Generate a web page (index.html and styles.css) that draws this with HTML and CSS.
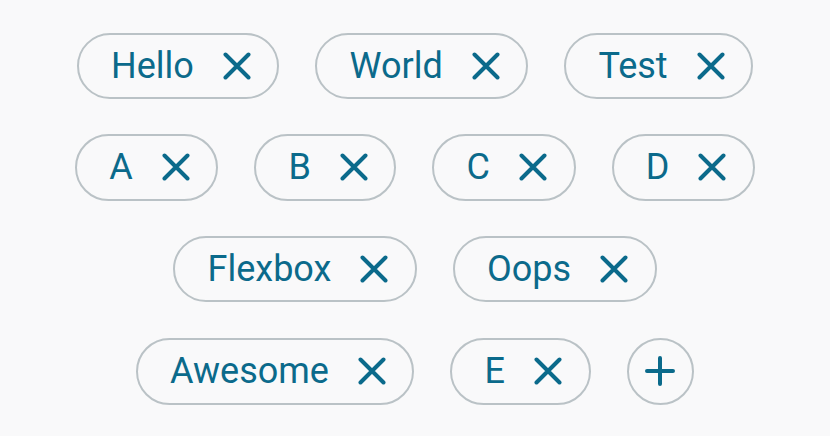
FILE: index.html
```html
<!DOCTYPE html>
<html lang="en">
<head>
<meta charset="utf-8">
<title>Chips</title>
<link rel="stylesheet" href="styles.css">
</head>
<body>
<div class="chips">
  <div class="chip"><span class="label">Hello</span><svg class="close" viewBox="0 0 28 28"><path d="M2.5 2.5L25.5 25.5M25.5 2.5L2.5 25.5"/></svg></div>
  <div class="chip"><span class="label">World</span><svg class="close" viewBox="0 0 28 28"><path d="M2.5 2.5L25.5 25.5M25.5 2.5L2.5 25.5"/></svg></div>
  <div class="chip"><span class="label">Test</span><svg class="close" viewBox="0 0 28 28"><path d="M2.5 2.5L25.5 25.5M25.5 2.5L2.5 25.5"/></svg></div>
  <div class="chip"><span class="label">A</span><svg class="close" viewBox="0 0 28 28"><path d="M2.5 2.5L25.5 25.5M25.5 2.5L2.5 25.5"/></svg></div>
  <div class="chip"><span class="label">B</span><svg class="close" viewBox="0 0 28 28"><path d="M2.5 2.5L25.5 25.5M25.5 2.5L2.5 25.5"/></svg></div>
  <div class="chip"><span class="label">C</span><svg class="close" viewBox="0 0 28 28"><path d="M2.5 2.5L25.5 25.5M25.5 2.5L2.5 25.5"/></svg></div>
  <div class="chip"><span class="label">D</span><svg class="close" viewBox="0 0 28 28"><path d="M2.5 2.5L25.5 25.5M25.5 2.5L2.5 25.5"/></svg></div>
  <div class="chip"><span class="label">Flexbox</span><svg class="close" viewBox="0 0 28 28"><path d="M2.5 2.5L25.5 25.5M25.5 2.5L2.5 25.5"/></svg></div>
  <div class="chip"><span class="label">Oops</span><svg class="close" viewBox="0 0 28 28"><path d="M2.5 2.5L25.5 25.5M25.5 2.5L2.5 25.5"/></svg></div>
  <div class="chip"><span class="label">Awesome</span><svg class="close" viewBox="0 0 28 28"><path d="M2.5 2.5L25.5 25.5M25.5 2.5L2.5 25.5"/></svg></div>
  <div class="chip"><span class="label">E</span><svg class="close" viewBox="0 0 28 28"><path d="M2.5 2.5L25.5 25.5M25.5 2.5L2.5 25.5"/></svg></div>
  <div class="add"><svg class="plus" viewBox="0 0 30 30"><path d="M2 15H28M15 2V28"/></svg></div>
</div>
</body>
</html>
```
FILE: styles.css
```css
html, body {
  margin: 0;
  padding: 0;
  background: #f9f9fa;
}

.chips {
  box-sizing: border-box;
  width: 830px;
  height: 436px;
  padding: 32.5px 20px 0;
  display: flex;
  flex-wrap: wrap;
  justify-content: center;
  align-content: flex-start;
  align-items: center;
  gap: 35.2px 36px;
  font-family: Roboto, "Noto Sans", sans-serif;
}

.chip {
  box-sizing: border-box;
  height: 66.5px;
  display: flex;
  align-items: center;
  gap: 29px;
  padding: 0 26.5px 0 32.2px;
  border: 2px solid #bac2c6;
  border-radius: 34px;
  color: #0b6a8b;
  font-size: 36px;
}

.label {
  line-height: 1;
}

.close {
  width: 28px;
  height: 28px;
  flex: none;
}

.close path,
.plus path {
  fill: none;
  stroke: #0b6a8b;
  stroke-width: 4;
  stroke-linecap: round;
}

.add {
  box-sizing: border-box;
  width: 67.5px;
  height: 67.5px;
  border: 2px solid #bac2c6;
  border-radius: 50%;
  display: flex;
  align-items: center;
  justify-content: center;
}

.plus {
  width: 30px;
  height: 30px;
}
```
